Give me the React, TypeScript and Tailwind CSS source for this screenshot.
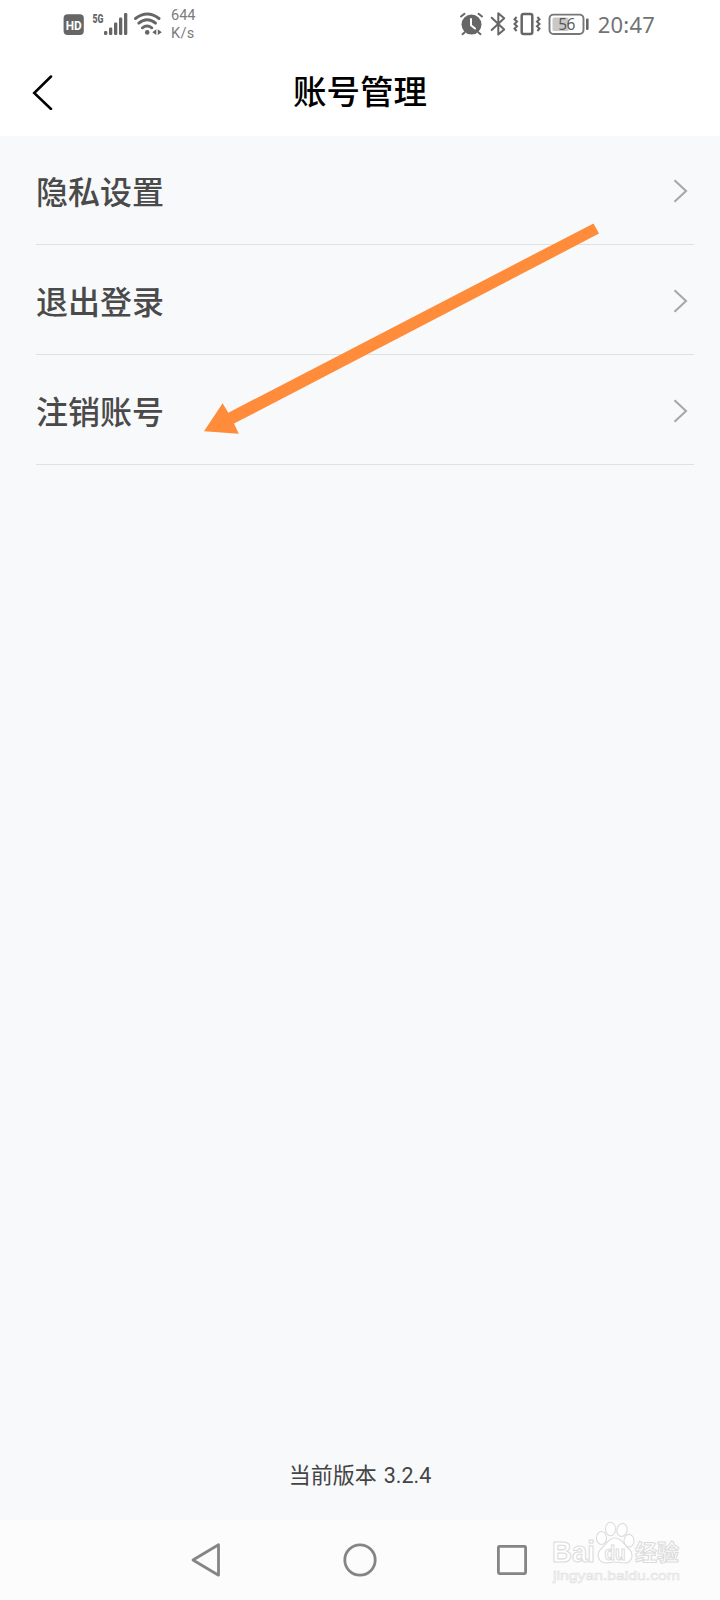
import React from "react";

const menuItems = ["隐私设置", "退出登录", "注销账号"];

const SignalIcons = () => (
  <div className="flex items-start text-[#5f5f5f]">
    <svg className="mt-[14px]" width="21" height="21" viewBox="0 0 21 21">
      <rect x="0.6" y="0.3" width="20.2" height="20.6" rx="4" fill="#666" />
      <text x="10.7" y="15.6" textAnchor="middle" textLength="16" lengthAdjust="spacingAndGlyphs" fill="#fff" fontFamily="Roboto, sans-serif" fontWeight="700" fontSize="13.5">HD</text>
    </svg>
    <svg className="ml-2" width="38" height="40" viewBox="0 0 38 40" fill="#666">
      <text x="0.5" y="22.8" textLength="11" lengthAdjust="spacingAndGlyphs" fontFamily="Roboto, sans-serif" fontWeight="900" fontSize="13.5">5G</text>
      <rect x="12" y="31" width="3.3" height="4" rx="1.2" />
      <rect x="17" y="27.5" width="3.3" height="7.5" rx="1.2" />
      <rect x="22" y="22.5" width="3.3" height="12.5" rx="1.2" />
      <rect x="27" y="17.5" width="3.3" height="17.5" rx="1.2" />
      <rect x="32" y="13" width="3.3" height="22" rx="1.2" />
    </svg>
    <svg className="ml-1" width="32" height="40" viewBox="0 0 32 40" fill="none" stroke="#666" strokeWidth="2.9" strokeLinecap="round">
      <path d="M1.5 18.5 Q13.3 9.5 25 18.5" />
      <path d="M4.8 23.2 Q13.3 16.5 21.5 23.2" />
      <path d="M8.4 27.8 Q13 24.3 17.8 27.8" />
      <circle cx="13.2" cy="32.4" r="2.3" fill="#666" stroke="none" />
      <path d="M22.3 29.2V35L18.3 32.2ZM23.8 29.2V35L27.8 32.2Z" fill="#666" stroke="none" />
    </svg>
    <div className="mt-[7px] ml-[5px] font-[Roboto,sans-serif] text-[14.5px] leading-[18px] text-[#7c7c7c]">
      <p>644</p>
      <p className="tracking-[0.3px]">K/s</p>
    </div>
  </div>
);

const DeviceIcons = () => (
  <div className="flex items-start">
    <svg width="26" height="40" viewBox="0 0 26 40">
      <circle cx="12.5" cy="24.6" r="10" fill="#666" />
      <path d="M2 16.5 L5.5 13.8 M23 16.5 L19.5 13.8 M5.5 32.5 L3.5 34.2 M19.5 32.5 L21.5 34.2" stroke="#666" strokeWidth="2" strokeLinecap="round" />
      <path d="M12 19v6.2l4 3.3" fill="none" stroke="#fff" strokeWidth="2" strokeLinecap="round" />
    </svg>
    <svg className="ml-[5px]" width="17" height="40" viewBox="0 0 17 40" fill="none" stroke="#666" strokeWidth="2" strokeLinejoin="round" strokeLinecap="round">
      <path d="M1.7 17.8 L14.2 29.6 L8.3 34.5 V13.2 L14.2 18.2 L1.7 30" />
    </svg>
    <svg className="ml-[6px]" width="28" height="40" viewBox="0 0 28 40" fill="none" stroke="#666">
      <rect x="8.7" y="14" width="10.6" height="20" rx="2" strokeWidth="2.5" />
      <path d="M3.6 17 L1.5 19.3 L4 21.5 L1.5 24 L4 26.3 L1.5 28.5 L3.6 31" strokeWidth="2" />
      <path d="M24.4 17 L26.5 19.3 L24 21.5 L26.5 24 L24 26.3 L26.5 28.5 L24.4 31" strokeWidth="2" />
    </svg>
    <svg className="ml-[7px]" width="42" height="40" viewBox="0 0 42 40">
      <rect x="1.5" y="14.6" width="34" height="19.4" rx="4" fill="none" stroke="#777" strokeWidth="1.9" />
      <rect x="4.5" y="17.6" width="16" height="13.4" rx="1.5" fill="#c8c8c8" />
      <rect x="38" y="18.5" width="2.6" height="11.5" rx="1" fill="#666" />
      <text x="18.8" y="29.8" textAnchor="middle" textLength="17" fontFamily="'Open Sans', sans-serif" fontSize="15.5" fill="#555">56</text>
    </svg>
    <span className="mt-[9px] ml-2 font-['Noto_Sans',sans-serif] text-[22px] leading-[30px] tracking-[0.2px] text-[#727272]">20:47</span>
  </div>
);

const StatusBar = () => (
  <div className="flex h-12 justify-between pr-[65px] pl-[63px]">
    <SignalIcons />
    <DeviceIcons />
  </div>
);

const Header = () => (
  <header className="grid h-[88px] grid-cols-[80px_1fr_80px] items-center bg-white">
    <svg className="ml-8" width="22" height="36" viewBox="0 0 22 36" fill="none" stroke="#000" strokeWidth="2.5" strokeLinecap="round">
      <path d="M19 2.5 L2.2 19 L19 35" />
    </svg>
    <h1 className="pb-1 text-center font-['KaiTi','Noto_Sans_CJK_SC',sans-serif] text-[33.5px] leading-[48px] font-medium text-black">账号管理</h1>
  </header>
);

const MenuRow = ({ label }: MenuRowProps) => (
  <div className="flex h-[110px] items-center justify-between border-b border-[#dfe1e4] pr-[6px]">
    <span className="text-[32px] leading-[46px] font-medium text-[#4a4a4a]">{label}</span>
    <svg className="mt-0.5" width="15" height="24" viewBox="0 0 15 24" fill="none" stroke="#a8a8aa" strokeWidth="2.1">
      <path d="M1.5 1.2 L13 12 L1.5 22.8" />
    </svg>
  </div>
);

type MenuRowProps = {
  label: string;
};

const Watermark = () => (
  <svg className="absolute top-0 left-[550px]" width="140" height="70" viewBox="0 0 140 70" fill="#fff" stroke="#dcdcdc" strokeWidth="1.1">
    <g fontFamily="'Liberation Sans', 'Noto Sans CJK SC', sans-serif">
      <text x="2" y="42" textLength="43" lengthAdjust="spacingAndGlyphs" fontSize="29" fontWeight="700">Bai</text>
      <ellipse cx="51.5" cy="18" rx="5" ry="6.5" />
      <ellipse cx="60.5" cy="9" rx="5" ry="6.7" />
      <ellipse cx="72" cy="10" rx="5" ry="6.5" transform="rotate(12 72 10)" />
      <ellipse cx="79" cy="20.7" rx="5" ry="6.3" />
      <path d="M65 18 C58 18 56.5 24.5 51.5 28.5 C46 33 47.5 43 56 43 C61 43 60 42 65 42 C70 42 70 43 74.5 43 C83 43 84 33 78.5 28.5 C73.5 24.5 72 18 65 18Z" />
      <text x="54.5" y="39.5" textLength="21" lengthAdjust="spacingAndGlyphs" fontSize="20" fontWeight="700">du</text>
      <text x="85" y="40" textLength="44" fontSize="22" fontWeight="700" fontFamily="'Noto Sans CJK SC', sans-serif">经验</text>
      <text x="3" y="60" textLength="127" lengthAdjust="spacingAndGlyphs" fontSize="13.5" strokeWidth="0.6" stroke="#e0e0e0">jingyan.baidu.com</text>
    </g>
  </svg>
);

const NavBar = () => (
  <nav className="relative flex h-20 items-center bg-[#fcfcfc] pl-[190px]">
    <svg width="32" height="36" viewBox="0 0 32 36" fill="none" stroke="#858585" strokeWidth="2.8" strokeLinejoin="round">
      <path d="M28.5 2.8 V33.2 L3 18Z" />
    </svg>
    <svg className="ml-[120px]" width="36" height="36" viewBox="0 0 36 36" fill="none" stroke="#858585" strokeWidth="2.8">
      <circle cx="18" cy="18" r="15.2" />
    </svg>
    <svg className="ml-[116px]" width="36" height="36" viewBox="0 0 36 36" fill="none" stroke="#858585" strokeWidth="2.8">
      <rect x="4.4" y="4.4" width="27.2" height="27.2" rx="1" />
    </svg>
    <Watermark />
  </nav>
);

const App = () => {
  return (
    <div className="relative flex h-[1600px] w-[720px] flex-col overflow-hidden bg-white font-['Noto_Sans_CJK_SC',sans-serif]">
      <StatusBar />
      <Header />
      <main className="flex flex-1 flex-col bg-[#f8f9fb]">
        <div className="-mt-px pr-[26px] pl-9">
          {menuItems.map((label) => (
            <MenuRow key={label} label={label} />
          ))}
        </div>
        <p className="mt-auto mb-7 text-center text-[22px] leading-8 text-[#444]">
          当前版本 <span className="ml-0.5 font-[Roboto,sans-serif] text-[21.5px]">3.2.4</span>
        </p>
      </main>
      <NavBar />
      <svg className="absolute top-[215px] left-[195px]" width="415" height="230" viewBox="195 215 415 230">
        <path d="M593.5 223.4 L599 233.6 L234 423.6 L238.8 433.7 L204 431.3 L222.6 403.3 L228.3 412.7Z" fill="#ff8c3a" />
      </svg>
    </div>
  );
};

export default App;
